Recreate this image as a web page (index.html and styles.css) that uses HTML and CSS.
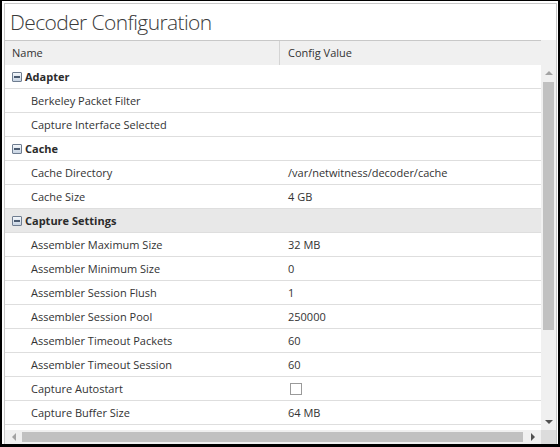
FILE: index.html
```html
<!DOCTYPE html>
<html>
<head>
<meta charset="utf-8">
<link rel="stylesheet" href="styles.css">
</head>
<body>
<div class="frame">
  <div class="panel">
    <div class="title">Decoder Configuration</div>
    <div class="grid">
      <div class="top">
        <div class="header">
          <div class="hcell name">Name</div>
          <div class="hcell value">Config Value</div>
        </div>
        <div class="vcorner"></div>
      </div>
      <div class="middle">
        <div class="rows">
          <div class="row group"><span class="toggle"></span>Adapter</div>
          <div class="row"><div class="c-name">Berkeley Packet Filter</div><div class="c-val"></div></div>
          <div class="row"><div class="c-name">Capture Interface Selected</div><div class="c-val"></div></div>
          <div class="row group"><span class="toggle"></span>Cache</div>
          <div class="row"><div class="c-name">Cache Directory</div><div class="c-val">/var/netwitness/decoder/cache</div></div>
          <div class="row"><div class="c-name">Cache Size</div><div class="c-val">4 GB</div></div>
          <div class="row group selected"><span class="toggle"></span>Capture Settings</div>
          <div class="row"><div class="c-name">Assembler Maximum Size</div><div class="c-val">32 MB</div></div>
          <div class="row"><div class="c-name">Assembler Minimum Size</div><div class="c-val">0</div></div>
          <div class="row"><div class="c-name">Assembler Session Flush</div><div class="c-val">1</div></div>
          <div class="row"><div class="c-name">Assembler Session Pool</div><div class="c-val">250000</div></div>
          <div class="row"><div class="c-name">Assembler Timeout Packets</div><div class="c-val">60</div></div>
          <div class="row"><div class="c-name">Assembler Timeout Session</div><div class="c-val">60</div></div>
          <div class="row"><div class="c-name">Capture Autostart</div><div class="c-val"><span class="checkbox"></span></div></div>
          <div class="row"><div class="c-name">Capture Buffer Size</div><div class="c-val">64 MB</div></div>
          <div class="row"><div class="c-name"></div><div class="c-val"></div></div>
        </div>
        <div class="vscroll">
          <div class="sbtn"><span class="arr up"></span></div>
          <div class="vtrack"><div class="vthumb"></div></div>
          <div class="sbtn"><span class="arr down"></span></div>
        </div>
      </div>
      <div class="hscroll">
        <div class="hbar">
          <div class="hbtn"><span class="arr left"></span></div>
          <div class="htrack"><div class="hthumb"></div></div>
          <div class="hbtn"><span class="arr right"></span></div>
        </div>
        <div class="scorner"></div>
      </div>
    </div>
  </div>
</div>
</body>
</html>
```
FILE: styles.css
```css
* { box-sizing: border-box; }
html, body { margin: 0; padding: 0; }
body {
  width: 560px;
  height: 447px;
  overflow: hidden;
  font-family: "Open Sans", "DejaVu Sans", sans-serif;
  color: #333;
  background: #000;
}
.frame {
  width: 560px;
  height: 447px;
  border-style: solid;
  border-color: #000;
  border-width: 1px 2px 3px 2px;
  padding: 2px 1px 0 2px;
  background: #fff;
}
.panel {
  height: 100%;
  border: 1px solid #c8c8c8;
  border-bottom: 0;
  display: flex;
  flex-direction: column;
  background: #fff;
}
.title {
  height: 36px;
  flex: none;
  padding: 3px 0 0 5px;
  font-size: 21px;
  letter-spacing: -0.6px;
  line-height: 30px;
  color: #3a3a3a;
  font-weight: 300;
}
.grid {
  flex: 1;
  display: flex;
  flex-direction: column;
  min-height: 0;
}
.top {
  display: flex;
  height: 25px;
  flex: none;
  background: #f0f0f0;
}
.header {
  flex: 1;
  display: flex;
  border-top: 1px solid #c8c8c8;
  font-size: 11px;
  line-height: 23px;
}
.hcell { height: 24px; }
.hcell.name { width: 274px; padding-left: 7px; }
.hcell.value { flex: 1; border-left: 1px solid #d4d4d4; padding-left: 8px; }
.vcorner { width: 15px; background: #f0f0f0; }
.middle {
  flex: 1;
  display: flex;
  min-height: 0;
}
.rows {
  flex: 1;
  overflow: hidden;
}
.row {
  height: 24px;
  display: flex;
  align-items: center;
  border-bottom: 1px solid #dedede;
  font-size: 11px;
  background: #fff;
}
.row.group {
  font-size: 11px;
  font-weight: 700;
  padding-left: 7px;
  color: #2b2b2b;
}
.row.selected { background: #e8e8e8; }
.toggle {
  width: 10px;
  height: 10px;
  border: 1px solid #6f7d90;
  background: linear-gradient(#f4f7fb, #c7d3e2);
  margin-right: 3px;
  display: flex;
  align-items: center;
  justify-content: center;
  border-radius: 1px;
}
.toggle::before {
  content: "";
  width: 6px;
  height: 2px;
  background: #4a5a70;
}
.c-name { width: 275px; padding-left: 26px; }
.c-val { flex: 1; padding-left: 8px; display: flex; align-items: center; }
.checkbox {
  width: 12px;
  height: 12px;
  border: 1px solid #9a9a9a;
  background: #fff;
  margin-left: 2px;
}
.vscroll {
  width: 15px;
  background: #f0f0f0;
  display: flex;
  flex-direction: column;
}
.sbtn {
  height: 16px;
  flex: none;
  display: flex;
  align-items: center;
  justify-content: center;
}
.vtrack { flex: 1; padding: 1px 2px 0 2px; }
.vthumb { height: 248px; background: #c1c1c1; }
.hscroll {
  height: 14px;
  flex: none;
  display: flex;
}
.hbar {
  flex: 1;
  display: flex;
  background: #f0f0f0;
}
.hbtn {
  width: 17px;
  flex: none;
  display: flex;
  align-items: center;
  justify-content: center;
}
.htrack { flex: 1; padding: 2px 0; }
.hthumb { height: 100%; width: 501px; background: #c1c1c1; }
.scorner { width: 15px; background: #dcdcdc; }
.arr { width: 0; height: 0; border-style: solid; border-color: transparent; }
.arr.up { border-width: 0 4px 4px 4px; border-bottom-color: #a3a3a3; }
.arr.down { border-width: 4px 4px 0 4px; border-top-color: #505050; }
.arr.left { border-width: 4px 4px 4px 0; border-right-color: #a3a3a3; }
.arr.right { border-width: 4px 0 4px 4px; border-left-color: #505050; }
```
